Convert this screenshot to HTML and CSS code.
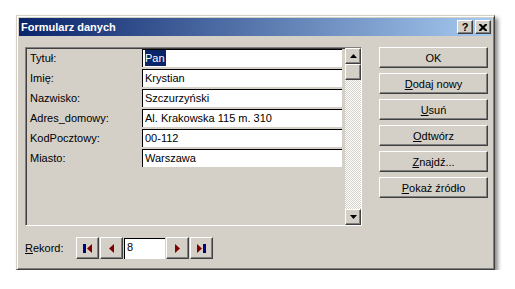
FILE: index.html
```html
<!DOCTYPE html>
<html lang="pl">
<head>
    <meta charset="UTF-8">
    <title>Formularz danych</title>
    <link rel="stylesheet" href="styles.css">
</head>
<body>
    <div class="window">
        <div class="titlebar">
            <span class="title">Formularz danych</span>
            <div class="caption">
                <span class="cap-btn">?</span>
                <span class="cap-btn">
                    <svg width="8" height="7" viewBox="0 0 8 7"><path d="M0 0h2l2 2 2-2h2v1l-2.5 2.5 2.5 2.5v1h-2l-2-2-2 2h-2v-1l2.5-2.5-2.5-2.5z" fill="#000"/></svg>
                </span>
            </div>
        </div>
        <div class="client">
            <div class="main">
                <div class="record-frame">
                    <div class="fields">
                        <div class="row"><label>Tytuł:</label><div class="field"><span class="sel">Pan</span></div></div>
                        <div class="row"><label>Imię:</label><div class="field">Krystian</div></div>
                        <div class="row"><label>Nazwisko:</label><div class="field">Szczurzyński</div></div>
                        <div class="row"><label>Adres_domowy:</label><div class="field">Al. Krakowska 115 m. 310</div></div>
                        <div class="row"><label>KodPocztowy:</label><div class="field">00-112</div></div>
                        <div class="row"><label>Miasto:</label><div class="field">Warszawa</div></div>
                    </div>
                    <div class="scrollbar">
                        <div class="raised sb-btn">
                            <svg width="7" height="4" viewBox="0 0 7 4"><polygon points="3.5,0 7,4 0,4" fill="#000"/></svg>
                        </div>
                        <div class="raised sb-thumb"></div>
                        <div class="sb-track"></div>
                        <div class="raised sb-btn">
                            <svg width="7" height="4" viewBox="0 0 7 4"><polygon points="0,0 7,0 3.5,4" fill="#000"/></svg>
                        </div>
                    </div>
                </div>
                <div class="actions">
                    <button class="raised">OK</button>
                    <button class="raised"><u>D</u>odaj nowy</button>
                    <button class="raised"><u>U</u>suń</button>
                    <button class="raised"><u>O</u>dtwórz</button>
                    <button class="raised"><u>Z</u>najdź...</button>
                    <button class="raised"><u>P</u>okaż źródło</button>
                </div>
            </div>
            <div class="nav">
                <span class="nav-label"><u>R</u>ekord:</span>
                <span class="raised nav-btn">
                    <svg width="9" height="9" viewBox="0 0 9 9"><rect x="0" y="0" width="3" height="9" fill="#000080"/><polygon points="9,0 4,4.5 9,9" fill="#800000"/></svg>
                </span>
                <span class="raised nav-btn">
                    <svg width="5" height="9" viewBox="0 0 5 9"><polygon points="5,0 0,4.5 5,9" fill="#800000"/></svg>
                </span>
                <span class="nav-input">8</span>
                <span class="raised nav-btn">
                    <svg width="5" height="9" viewBox="0 0 5 9"><polygon points="0,0 5,4.5 0,9" fill="#800000"/></svg>
                </span>
                <span class="raised nav-btn">
                    <svg width="9" height="9" viewBox="0 0 9 9"><polygon points="0,0 5,4.5 0,9" fill="#800000"/><rect x="6" y="0" width="3" height="9" fill="#000080"/></svg>
                </span>
            </div>
        </div>
    </div>
</body>
</html>
```

FILE: styles.css
```css
body {
    margin: 0;
    background-color: #ffffff;
    font-family: "Liberation Sans", Arial, sans-serif;
    font-size: 11px;
    color: #000000;
}
.window {
    box-sizing: border-box;
    width: 479px;
    height: 255px;
    margin: 15px 0 0 16px;
    padding: 2px;
    background-color: #d4d0c8;
    border: 1px solid;
    border-color: #d4d0c8 #404040 #404040 #d4d0c8;
    box-shadow: inset 1px 1px #ffffff, inset -1px -1px #808080, 3px 3px 4px rgba(0, 0, 0, 0.45);
}
.titlebar {
    height: 18px;
    display: flex;
    align-items: center;
    justify-content: space-between;
    padding: 0 1px 0 2px;
    background: linear-gradient(to right, #0a246a, #a6caf0);
}
.title {
    color: #ffffff;
    font-weight: bold;
    font-size: 11px;
}
.caption {
    display: flex;
    gap: 2px;
}
.cap-btn {
    box-sizing: border-box;
    width: 16px;
    height: 14px;
    display: flex;
    align-items: center;
    justify-content: center;
    background-color: #d4d0c8;
    border: 1px solid;
    border-color: #ffffff #404040 #404040 #ffffff;
    box-shadow: inset -1px -1px #808080;
    font-weight: bold;
    font-size: 11px;
    line-height: 1;
}
.raised {
    box-sizing: border-box;
    background-color: #d4d0c8;
    border: 1px solid;
    border-color: #ffffff #404040 #404040 #ffffff;
    box-shadow: inset -1px -1px #808080;
}
.client {
    padding: 11px 0 0 6px;
}
.main {
    display: flex;
    align-items: flex-start;
}
.record-frame {
    box-sizing: border-box;
    width: 337px;
    height: 179px;
    display: flex;
    border: 1px solid;
    border-color: #808080 #ffffff #ffffff #808080;
    box-shadow: inset 1px 1px #404040;
    padding: 1px 0 0 1px;
}
.fields {
    flex: 1;
    display: flex;
    flex-direction: column;
    gap: 2px;
}
.row {
    display: flex;
    height: 18px;
}
.row label {
    width: 115px;
    padding-left: 3px;
    box-sizing: border-box;
    line-height: 18px;
}
.field {
    box-sizing: border-box;
    width: 200px;
    height: 18px;
    background-color: #ffffff;
    border-top: 1px solid #000000;
    border-left: 1px solid #000000;
    padding-left: 2px;
    line-height: 16px;
    white-space: nowrap;
}
.sel {
    display: inline-block;
    background-color: #0a246a;
    color: #ffffff;
    padding-right: 1px;
}
.scrollbar {
    width: 16px;
    display: flex;
    flex-direction: column;
    margin-top: -1px;
}
.sb-btn {
    height: 16px;
    display: flex;
    align-items: center;
    justify-content: center;
}
.sb-thumb {
    height: 16px;
}
.sb-track {
    flex: 1;
    background: repeating-conic-gradient(#d4d0c8 0 25%, #ffffff 0 50%) 0 0 / 2px 2px;
}
.actions {
    margin-left: 17px;
    width: 109px;
    display: flex;
    flex-direction: column;
    gap: 5px;
}
.actions button {
    height: 21px;
    font-family: inherit;
    font-size: 11px;
    color: #000000;
    padding: 0;
}
.nav {
    margin-top: 11px;
    display: flex;
    align-items: center;
    gap: 1px;
}
.nav-label {
    width: 50px;
}
.nav-btn {
    width: 23px;
    height: 22px;
    display: flex;
    align-items: center;
    justify-content: center;
}
.nav-input {
    box-sizing: border-box;
    width: 41px;
    height: 21px;
    background-color: #ffffff;
    border-top: 1px solid #000000;
    border-left: 1px solid #000000;
    padding-left: 2px;
    line-height: 17px;
}
```
